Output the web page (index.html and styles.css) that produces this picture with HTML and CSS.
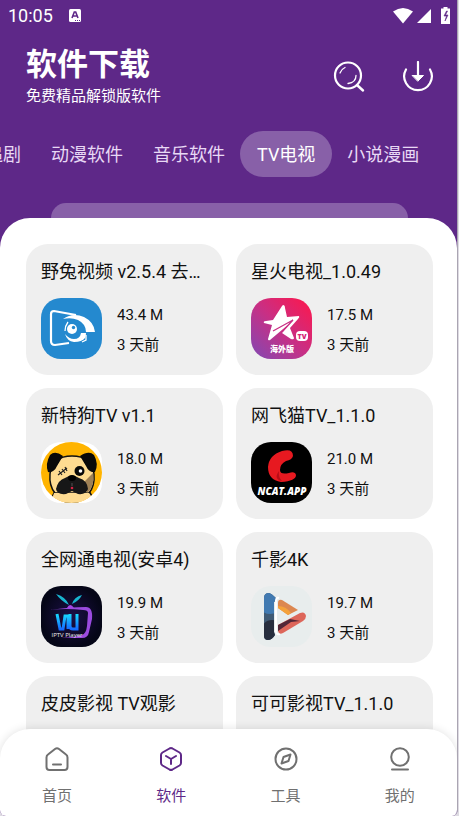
FILE: index.html
```
<!DOCTYPE html>
<html lang="zh-CN">
<head>
    <meta charset="UTF-8">
    <meta name="viewport" content="width=device-width, initial-scale=1.0">
    <title>软件下载</title>
    <link rel="stylesheet" href="styles.css">
</head>
<body>
    <div class="app">
        <div class="status-bar">
            <span class="time">10:05</span>
            <svg width="12" height="13" viewBox="0 0 12 13"><rect width="12" height="13" rx="1.5" fill="#fff"/><path d="M3 9 5.3 3h1.4L9 9M4 7h4" fill="none" stroke="#5e2888" stroke-width="1.6"/><path d="M6 11.5h1M8 11.5h1M10 11.5h1" stroke="#5e2888"/></svg>
            <div class="signals">
                <svg width="20" height="16" viewBox="0 0 20 16"><path d="M0 3.500Q10-3.500 20 3.500L10 15.500Z" fill="#fff"/></svg>
                <svg width="14" height="14" viewBox="0 0 14 14"><path d="M14 0v14H0Z" fill="#fff"/></svg>
                <svg class="battery" width="9" height="17" viewBox="0 0 9 17"><path d="M2.500 0h4v1.500H9V17H0V1.500h2.500Z" fill="#fff"/><path d="M5.500 4 3 9h2.500L4 14 7 8H4.500L6.500 4Z" fill="#5e2888" stroke="#5e2888" stroke-width=".6"/></svg>
            </div>
        </div>
        <header class="header">
            <div>
                <h1>软件下载</h1>
                <p>免费精品解锁版软件</p>
            </div>
            <div class="actions">
                <button type="button" aria-label="搜索">
                    <svg width="32" height="32" viewBox="0 0 32 32" fill="none" stroke="#fff" stroke-linecap="round"><circle cx="15" cy="14.500" r="13" stroke-width="2.200"/><path d="m24 24 6 5.500" stroke-width="2.400"/><path d="M7 12Q8.500 8 12 6.500M23 14.500q0 7-8 8" stroke-width="1.300"/></svg>
                </button>
                <button type="button" aria-label="下载">
                    <svg width="32" height="32" viewBox="0 0 32 32" fill="none" stroke="#fff" stroke-linecap="round"><path d="M4 8.500a13.800 13.800 0 1 0 24 0" stroke-width="2.200"/><path d="M16 1v16" stroke-width="2.200"/><path d="M10.500 14.500h11l-5.500 5.500Z" fill="#fff" stroke-width="1" stroke-linejoin="round"/></svg>
                </button>
            </div>
        </header>
        <nav class="tabs">
            <a href="#">追剧</a>
            <a href="#">动漫软件</a>
            <a href="#">音乐软件</a>
            <a href="#" class="active">TV电视</a>
            <a href="#">小说漫画</a>
        </nav>
        <div class="search-bar"></div>
        <main class="sheet">
            <div class="grid">
                <article class="card">
                    <h2>野兔视频 v2.5.4 去广告版</h2>
                    <div class="info">
                        <svg class="logo" viewBox="0 0 61 61">
                            <rect width="61" height="61" fill="#2489cf"/>
                            <path d="M35 17 13 13q-3 0-3 3v27q0 4 4 4l14-2" fill="none" stroke="#fff" stroke-width="2.200"/>
                            <path d="M22 21Q32 14 43 19q10 5 11 15h-9q0-8-8-12-7-3-15-1Z" fill="#fff"/>
                            <path d="M24 36q2 7 9 8 8 0 11-4 1-2 1-5h-5q-1 6-7 6-5 0-9-5Z" fill="#fff"/>
                            <path d="M45 37v5l-4 2M27 24q-3 4-3 9" fill="none" stroke="#fff" stroke-width="1.300"/>
                            <circle cx="31" cy="31" r="5" fill="#fff"/><circle cx="32.500" cy="29.500" r="1.700" fill="#2489cf"/>
                        </svg>
                        <div class="meta"><span>43.4 M</span><span>3 天前</span></div>
                    </div>
                </article>
                <article class="card">
                    <h2>星火电视_1.0.49</h2>
                    <div class="info">
                        <svg class="logo" viewBox="0 0 61 61">
                            <defs><linearGradient id="star-bg" x1="0" y1="1" x2="1" y2="0"><stop offset="0" stop-color="#8049b4"/><stop offset=".5" stop-color="#c92f84"/><stop offset="1" stop-color="#ff164a"/></linearGradient></defs>
                            <rect width="61" height="61" fill="url(#star-bg)"/>
                            <path d="M32 7q2 0 2 3l2 9 12-1q1 1-1 3l-8 9 4 10q0 2-3 1l-9-6 7-9-19 16q-2 1-2-1l4-14-8-2q-1-2 2-2l7-1L31 8Z" fill="#fff"/>
                            <path d="m22 33 20-11-11 12" fill="none" stroke="#c92f84" stroke-width="1.300"/>
                            <rect x="45" y="33" width="12" height="10" rx="4" fill="#fff"/>
                            <text x="51" y="41" class="logo-text" font-size="7" fill="#d62675">TV</text>
                            <text x="31" y="54" class="logo-text" font-size="8" fill="#fff">海外版</text>
                        </svg>
                        <div class="meta"><span>17.5 M</span><span>3 天前</span></div>
                    </div>
                </article>
                <article class="card">
                    <h2>新特狗TV v1.1</h2>
                    <div class="info">
                        <svg class="logo" viewBox="0 0 61 61">
                            <defs><clipPath id="dog-circle"><circle cx="30.500" cy="30.500" r="30.500"/></clipPath></defs>
                            <rect width="61" height="61" fill="#fff"/>
                            <g clip-path="url(#dog-circle)">
                                <rect width="61" height="61" fill="#ffb400"/>
                                <path d="M8 61 14 49h34l7 12Z" fill="#fedb91" stroke="#111" stroke-width="1.500"/>
                                <path d="M9 32Q11 14 31 14t22 18q1 12-5 19H14Q8 44 9 32Z" fill="#fedb91" stroke="#111" stroke-width="1.500"/>
                                <path d="M52 31q2 14-6 20l-2-12Z" fill="#9e8055"/>
                                <path d="M13 51h35l4 10H10Z" fill="#fedb91"/>
                                <path d="M22 14Q14 8 9 13 4 22 7 30q6 1 9-6ZM39 14q9-6 14-1 5 9 1 17-6 1-9-6Z" fill="#090909"/>
                                <path d="M24 36q7-5 14 0 8 2 9 11-2 6-10 5l-6-3-6 3q-9 1-10-5 2-9 9-11Z" fill="#171717"/>
                                <ellipse cx="31" cy="36" rx="4" ry="3" fill="#000"/>
                                <circle cx="38.500" cy="29" r="5" fill="#080808"/><circle cx="39.500" cy="29" r="1.800" fill="#fff"/>
                                <path d="m17 33 9-7M18 29l3 4M21 27l3 4M24 25l2 4" stroke="#222" stroke-width="1.200"/>
                                <path d="M31 41v3" stroke="#555"/><circle cx="31" cy="46" r="1.300" fill="#d52343"/>
                            </g>
                        </svg>
                        <div class="meta"><span>18.0 M</span><span>3 天前</span></div>
                    </div>
                </article>
                <article class="card">
                    <h2>网飞猫TV_1.1.0</h2>
                    <div class="info">
                        <svg class="logo" viewBox="0 0 61 61">
                            <rect width="61" height="61"/>
                            <path d="M31 9Q42 6 42 14q-1 4-7 5-6 3-6 9 0 5 9 3 6-2 7 2 0 6-15 7Q17 38 17 25q1-12 14-16Z" fill="#e71920"/>
                            <path d="M28 29q-1 6 3 10-9-2-3-10Z" fill="#b90c16"/>
                            <text x="31" y="53" class="logo-text" font-size="10" font-style="italic" fill="#fff">NCAT.APP</text>
                        </svg>
                        <div class="meta"><span>21.0 M</span><span>3 天前</span></div>
                    </div>
                </article>
                <article class="card">
                    <h2>全网通电视(安卓4)</h2>
                    <div class="info">
                        <svg class="logo" viewBox="0 0 61 61">
                            <defs>
                                <radialGradient id="vu-bg"><stop stop-color="#1c1048"/><stop offset="1" stop-color="#050617"/></radialGradient>
                                <linearGradient id="vu-text" x2="0" y2="1"><stop stop-color="#16dcff"/><stop offset="1" stop-color="#166cff"/></linearGradient>
                            </defs>
                            <rect width="61" height="61" fill="url(#vu-bg)"/>
                            <path d="M15 8q10 3 13 11-8-4-13-11ZM41 9q-8 2-10 9 7-3 10-9Z" fill="#18b5cf"/>
                            <path d="M26 22q3-6 7 0Z" fill="#a646ea"/>
                            <path d="M9 24q20-3 36-3 7 0 6 12l-3 13q-1 6-7 6H20q15-1 21-3 4-1 5-9l1-13q0-3-5-3Q25 22 9 24Z" fill="#9b4bdf"/>
                            <path d="m16 28 3 15h3l2-13h3v13M29 28v12q0 3 3 3h4V28" fill="none" stroke="url(#vu-text)" stroke-width="3"/>
                            <text x="26" y="51" class="logo-text light" font-size="6" fill="#eee">IPTV Player</text>
                        </svg>
                        <div class="meta"><span>19.9 M</span><span>3 天前</span></div>
                    </div>
                </article>
                <article class="card">
                    <h2>千影4K</h2>
                    <div class="info">
                        <svg class="logo" viewBox="0 0 61 61">
                            <defs><clipPath id="play-bar"><path d="M13 12q0-5 5-5 2 0 8 6l-3 3v30l1 3q-3 5-7 5-4 0-4-4Z"/></clipPath></defs>
                            <rect width="61" height="61" fill="#e8eded"/>
                            <g clip-path="url(#play-bar)"><rect x="12" y="6" width="14" height="49" fill="#405b75"/><circle cx="19" cy="16" r="12" fill="#417ab1"/><circle cx="21" cy="45" r="11" fill="#272e3e"/></g>
                            <path d="M28 12q-3-1-3 3v30q0 4 4 3" fill="none" stroke="#fff" stroke-width="2"/>
                            <path d="M27 17q0-4 4-3l16 10-10 5-10-7Z" fill="#dc8750"/>
                            <path d="M27 20q8 0 13 7l-3 2-10-7Z" fill="#f4a23b"/>
                            <path d="m27 39 22-12q5-2 6 3 0 3-3 5L32 47q-4 2-5-2Z" fill="#dd665a"/>
                            <path d="m27 39 12-6 10 2-9 1-13 9Z" fill="#532738"/>
                        </svg>
                        <div class="meta"><span>19.7 M</span><span>3 天前</span></div>
                    </div>
                </article>
                <article class="card">
                    <h2>皮皮影视 TV观影</h2>
                </article>
                <article class="card">
                    <h2>可可影视TV_1.1.0</h2>
                </article>
            </div>
        </main>
        <nav class="bottom-nav">
            <a href="#">
                <svg width="24" height="24" viewBox="0 0 24 24"><path d="M3 7.500 10 2q2-1.500 4 0l7 5.500q1.500 1 1.500 3V20q0 3-3 3h-15q-3 0-3-3v-9.500q0-2 1.500-3ZM8 17.500h8"/></svg>
                <span>首页</span>
            </a>
            <a href="#" class="active">
                <svg width="24" height="24" viewBox="0 0 24 24"><path d="m10.500 1.500-7 4Q2 6.500 2 8v8q0 1.500 1.500 2.500l7 4q1.500.8 3 0l7-4Q22 17.500 22 16V8q0-1.500-1.500-2.500l-7-4q-1.500-.8-3 0ZM7 9l5 3 5-3M12 12v5"/></svg>
                <span>软件</span>
            </a>
            <a href="#">
                <svg width="24" height="24" viewBox="0 0 24 24"><circle cx="12" cy="12" r="10.500"/><path d="m7.500 16.500 2-6.500 7-2.500-2 6.500Z"/></svg>
                <span>工具</span>
            </a>
            <a href="#">
                <svg width="24" height="24" viewBox="0 0 24 24"><circle cx="12" cy="10" r="8.800"/><path d="M4 22.500h16"/></svg>
                <span>我的</span>
            </a>
        </nav>
    </div>
</body>
</html>
```
FILE: styles.css
```
* {
    box-sizing: border-box;
}
body {
    margin: 0;
    padding-right: 1px;
    font-family: Roboto, "Noto Sans CJK SC", sans-serif;
    background-color: #dedbe3;
}
a {
    color: inherit;
    text-decoration: none;
}
svg {
    display: block;
}
.app {
    display: flex;
    flex-direction: column;
    height: 100vh;
    overflow: hidden;
    color: #fff;
    background-color: #5e2888;
    border-right: 1px solid #aaa5b2;
    border-radius: 0 0 6px 6px;
}
.status-bar {
    display: flex;
    align-items: center;
    height: 31px;
    padding: 0 7px 0 8px;
    font-size: 18px;
}
.time {
    margin-right: 16px;
}
.signals {
    display: flex;
    align-items: center;
    gap: 4px;
    margin-left: auto;
}
.battery {
    margin-left: 6px;
}
.header {
    display: flex;
    justify-content: space-between;
    padding: 15px 23px 0 26px;
}
.header h1 {
    margin: 0;
    font-size: 31px;
    font-weight: 700;
    line-height: 38px;
}
.header p {
    margin: 0;
    font-size: 15px;
    line-height: 24px;
}
.actions {
    display: flex;
    align-items: center;
    gap: 37px;
}
.actions button {
    padding: 0;
    border: none;
    background: none;
    cursor: pointer;
}
/* 标签栏已向左滚动 */
.tabs {
    display: flex;
    flex-shrink: 0;
    margin: 23px 0 26px -30px;
    white-space: nowrap;
}
.tabs a {
    padding: 2px 15px 0;
    font-size: 18px;
    line-height: 44px;
    color: #e8d9f5;
}
.tabs .active {
    padding: 2px 17px 0;
    border-radius: 23px;
    color: #fff;
    background-color: #8860a8;
}
.search-bar {
    flex-shrink: 0;
    height: 45px;
    margin: 0 49px -30px 51px;
    border-radius: 15px;
    background-color: #8860a8;
}
.sheet {
    flex: 1;
    min-height: 0;
    overflow: hidden;
    padding: 26px 24px 0 26px;
    border-radius: 30px 30px 0 0;
    color: #111;
    background-color: #fff;
    z-index: 1;
}
.grid {
    display: grid;
    grid-template-columns: repeat(2, minmax(0, 1fr));
    gap: 13px;
}
.card {
    height: 131px;
    padding: 16px 15px;
    border-radius: 22px;
    background-color: #efefef;
}
.card h2 {
    margin: 0 0 14px;
    overflow: hidden;
    font-size: 18px;
    font-weight: 400;
    line-height: 24px;
    white-space: nowrap;
    text-overflow: ellipsis;
}
.info {
    display: flex;
    gap: 15px;
}
.logo {
    width: 61px;
    height: 61px;
    border-radius: 20px;
}
.logo-text {
    font-family: "Open Sans", "Noto Sans CJK SC", sans-serif;
    font-weight: 800;
    text-anchor: middle;
}
.logo-text.light {
    font-weight: 400;
}
.meta {
    display: flex;
    flex-direction: column;
    padding-top: 2px;
    font-size: 15px;
    line-height: 30px;
}
.bottom-nav {
    display: flex;
    flex-shrink: 0;
    height: 87px;
    margin-top: -30px;
    padding-top: 18px;
    border-radius: 30px 30px 0 0;
    color: #707070;
    background-color: #fff;
    box-shadow: 0 0 10px rgba(0, 0, 0, 0.12);
    z-index: 2;
}
.bottom-nav a {
    display: flex;
    flex: 1;
    flex-direction: column;
    align-items: center;
    gap: 13px;
    font-size: 15px;
    line-height: 24px;
}
.bottom-nav svg {
    fill: none;
    stroke: currentColor;
    stroke-width: 2;
    stroke-linecap: round;
    stroke-linejoin: round;
}
.bottom-nav .active {
    color: #5e2888;
}
```
